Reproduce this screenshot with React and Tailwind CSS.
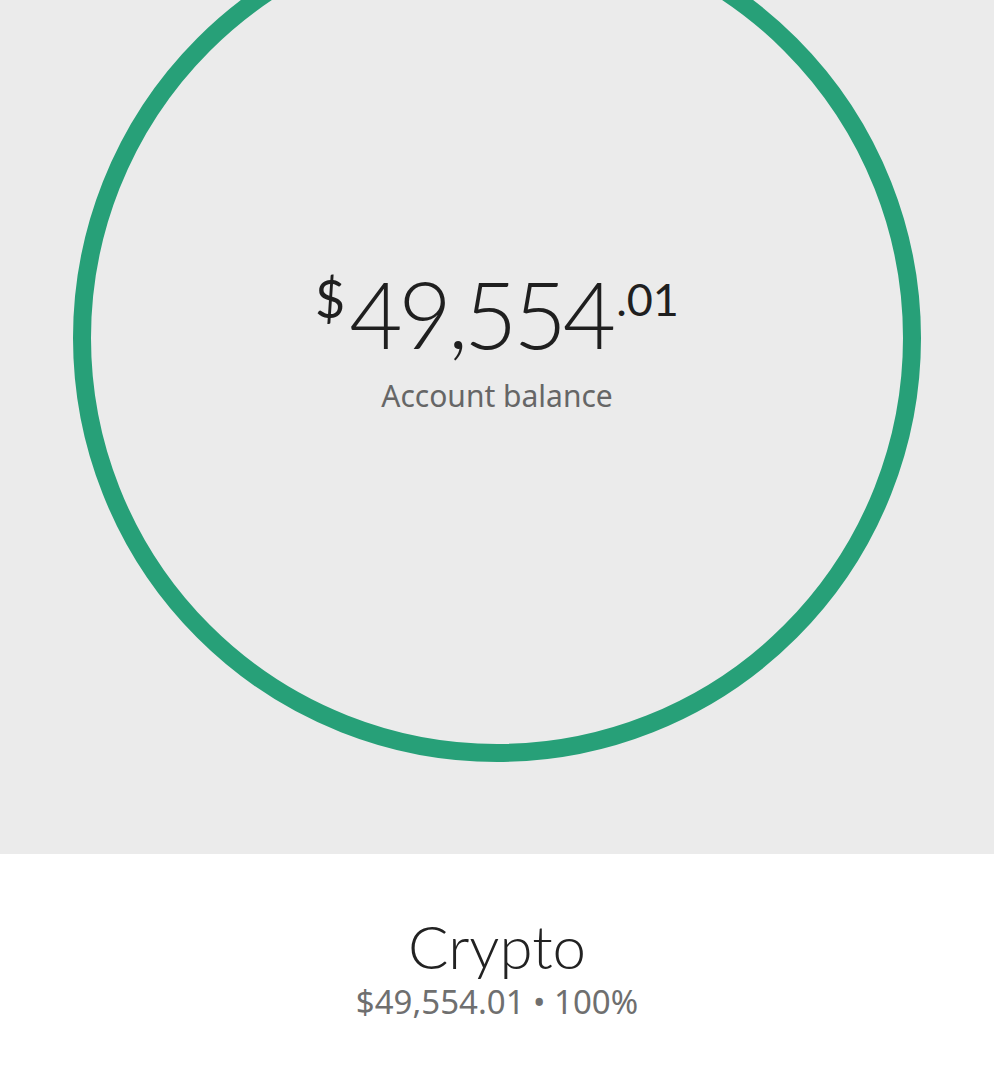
export default function App() {
  return (
    <div className="w-[994px] h-[1080px] overflow-hidden bg-white flex flex-col">
      <div className="relative h-[854px] bg-[#ebebeb] shrink-0 overflow-hidden">
        {/* donut ring */}
        <svg
          className="absolute left-[73px] top-[-86px]"
          width="848"
          height="848"
          viewBox="0 0 848 848"
        >
          <circle cx="424" cy="424" r="415" fill="none" stroke="#27a078" strokeWidth="18" />
        </svg>
        <div className="absolute inset-x-0 top-[268px] flex flex-col items-center">
          <div className="flex items-start text-[#1f1f1f] font-['Lato',sans-serif]">
            <span className="text-[52px] leading-none mt-[4px] mr-[4px] font-normal">$</span>
            <span className="text-[92px] leading-none tracking-[-4px] font-light">49,554</span>
            <span className="text-[45px] leading-none mt-[9px] ml-[4px] font-normal">.01</span>
          </div>
          <div className="mt-[13px] text-[30px] text-[#666666] font-['Noto_Sans',sans-serif]">
            Account balance
          </div>
        </div>
      </div>
      <div className="flex flex-col items-center pt-[62px]">
        <div className="text-[60px] leading-none text-[#222222] font-['Lato',sans-serif] font-light">Crypto</div>
        <div className="mt-[9px] text-[33px] leading-none text-[#6f6f6f] font-['Noto_Sans',sans-serif]">
          $49,554.01 • 100%
        </div>
      </div>
    </div>
  )
}
